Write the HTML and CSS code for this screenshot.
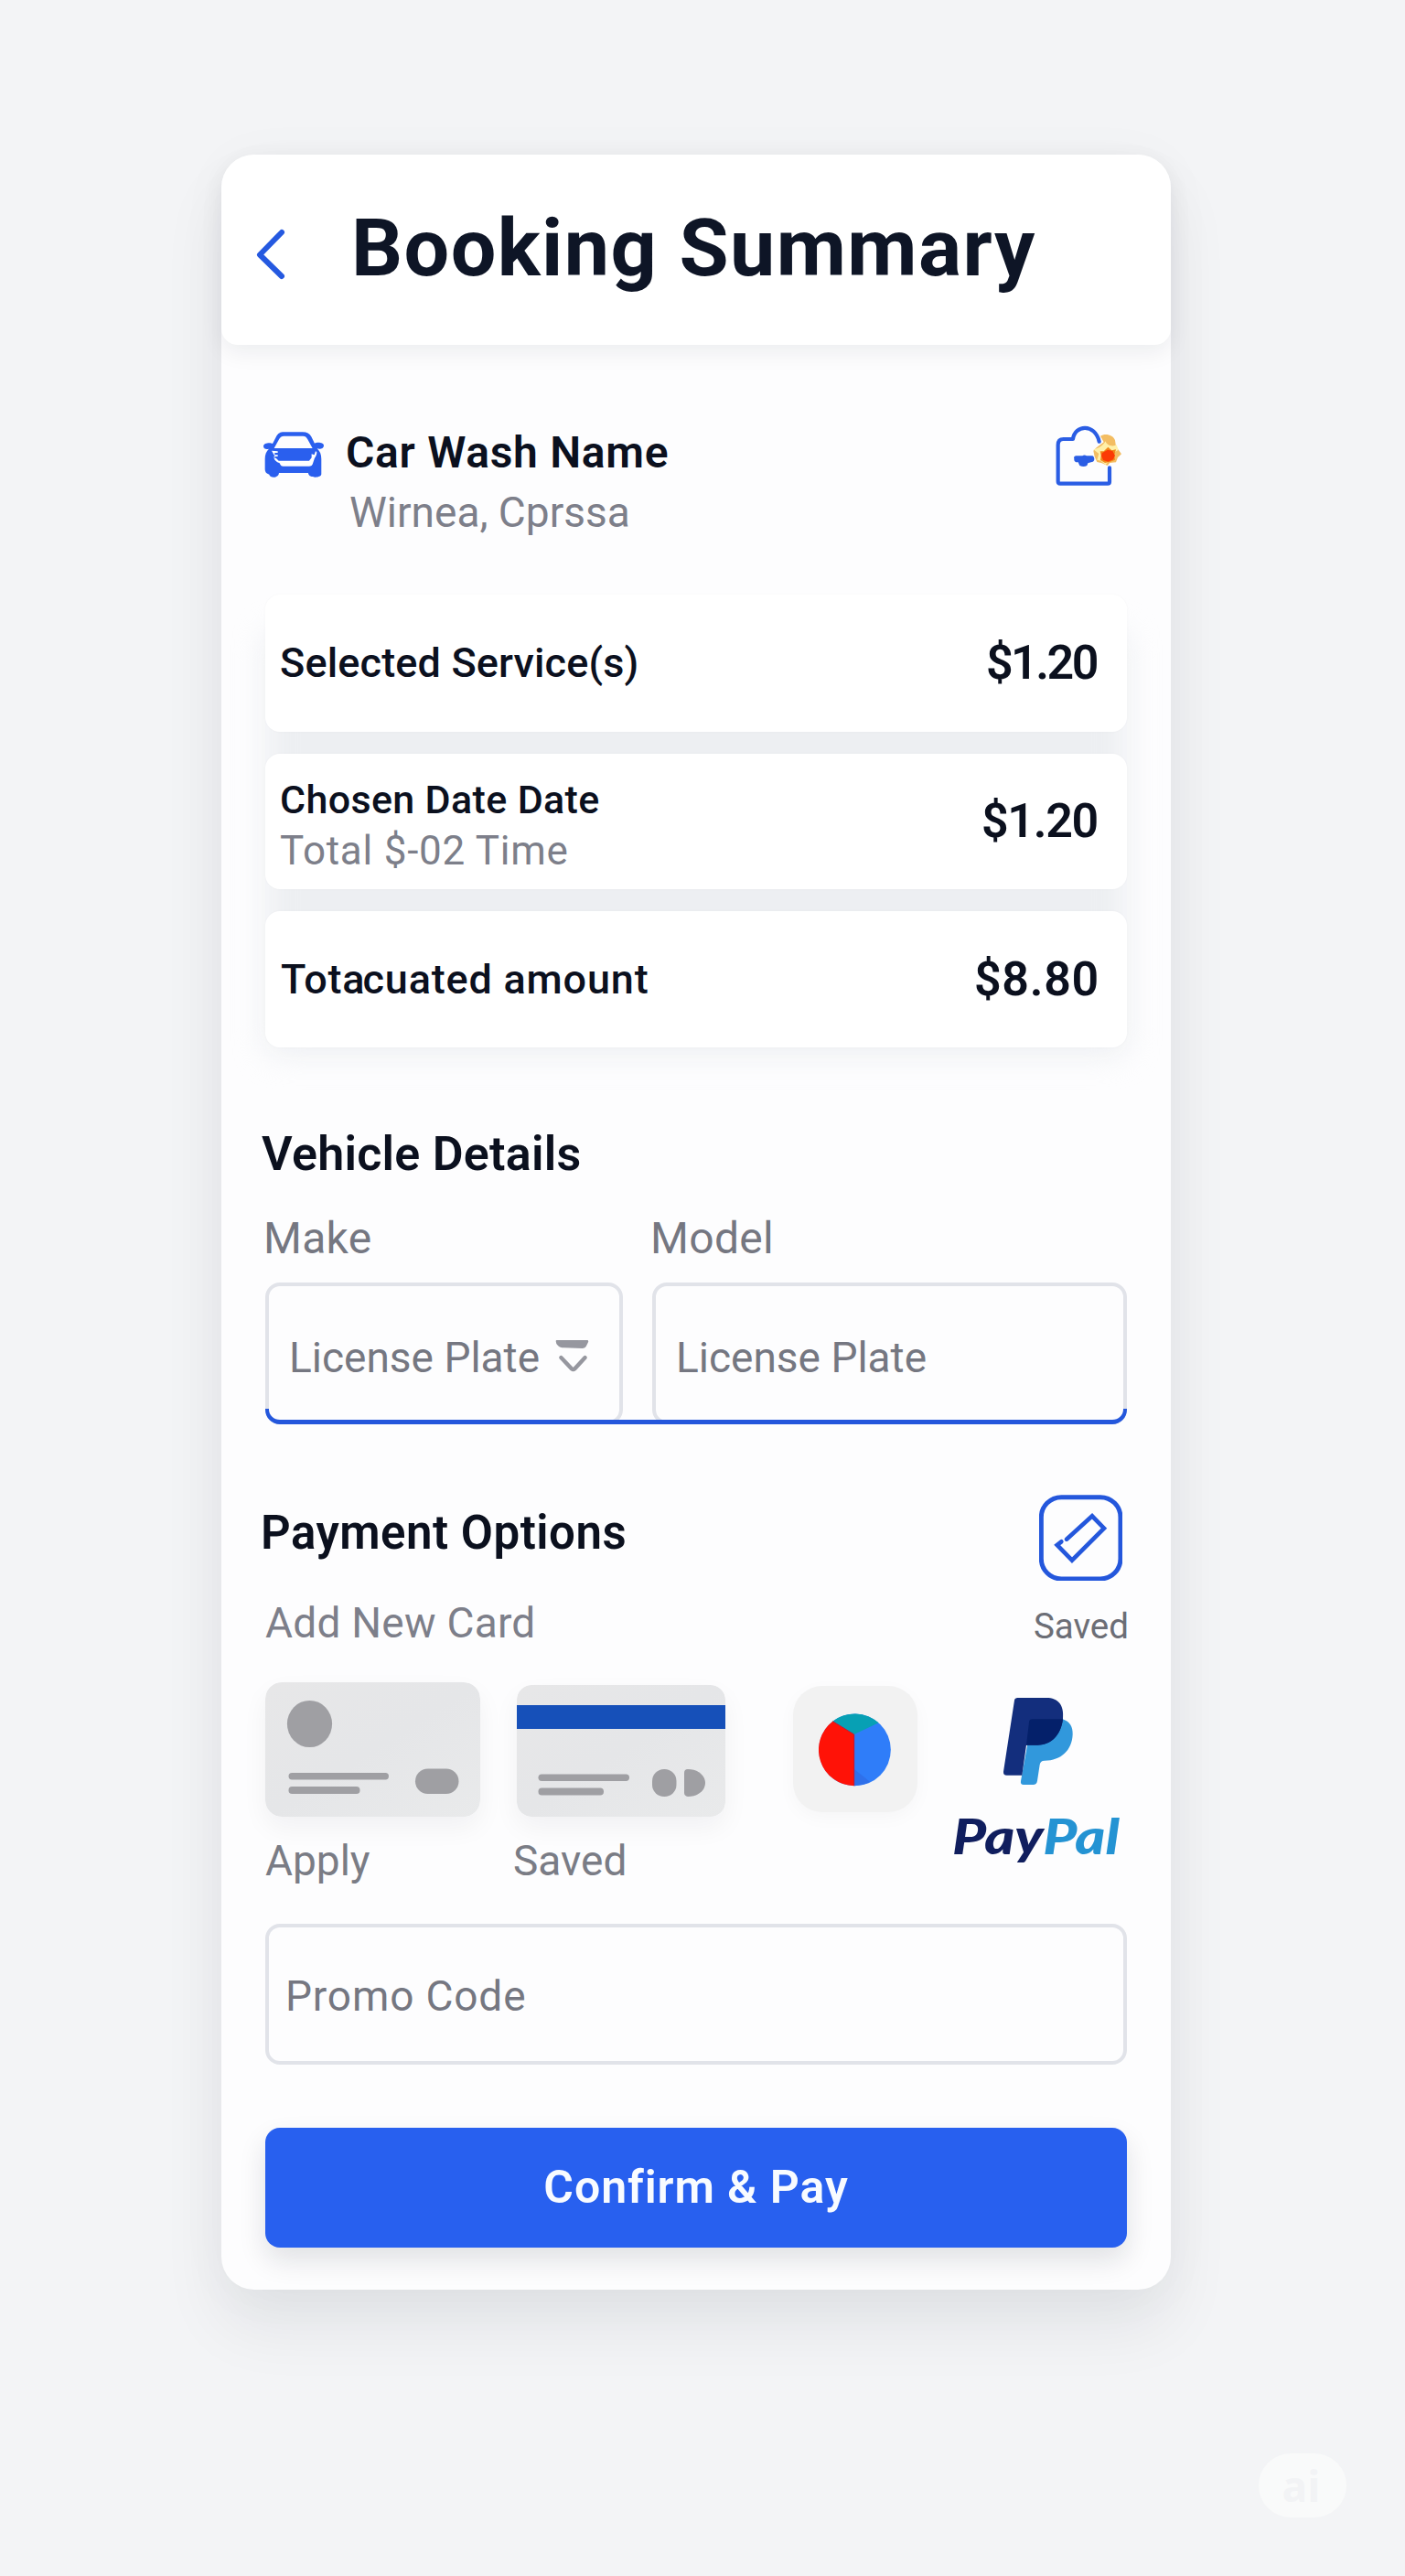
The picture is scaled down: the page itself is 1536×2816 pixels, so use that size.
FILE: index.html
```html
<!DOCTYPE html>
<html lang="en">
<head>
<meta charset="utf-8">
<title>Booking Summary</title>
<link rel="stylesheet" href="styles.css">
</head>
<body>
<main class="panel">
  <header class="header">
    <svg class="back" viewBox="0 0 36 60"><path d="M30 6 6 30.500 30 54" fill="none" stroke="#2559e0" stroke-width="6" stroke-linecap="round" stroke-linejoin="round"/></svg>
    <h1 class="title">Booking Summary</h1>
  </header>
  <div class="body">
    <section class="shop">
      <svg class="car" viewBox="80 90 205 160">
        <path fill="#2a5fee" fill-rule="evenodd" d="M150 97h62c14 0 22 5 28 15l11 22c6-4 30-4 30 7 0 11-13 13-22 10 10 9 14 20 14 34v50c0 14-43 14-43-4H134c-2 19-30 17-32 5-9-2-14-8-14-16v-35c0-14 4-24 13-33-8 2-18 1-18-9 0-11 23-13 30-8l12-23c6-11 13-15 25-15zM150 110c-7 0-11 3-15 9l-17 31h126l-16-29c-4-8-8-11-15-11z"/>
        <path fill="#fff" d="M110 158l20 2v5h-10v7h10v5h-16l8 3 11 11h100l8-10v-12l9 3 4-12 4 2c0 8-2 14-7 20l-5 15c-2 8-5 12-13 12h-86c-6 0-8-3-11-10-11-4-17-9-19-18l7 2z"/>
      </svg>
      <div class="shop-text">
        <h2 class="shop-name">Car Wash Name</h2>
        <p class="shop-place">Wirnea, Cprssa</p>
      </div>
      <svg class="bag" viewBox="459 66 225 216">
        <path d="M639 214v46q0 6-6 6H477q-7 0-7-7V139q0-19 18-19h31c6-48 72-52 86 8" fill="none" stroke="#2a5de4" stroke-width="12.500" stroke-linecap="round" stroke-linejoin="round"/>
        <path fill="#2a5de4" d="M528 175h22q6-5 14 0h18c9 1 10 19-1 20l-13 4-3 8q-11 6-24 0l-5-11q-15 1-13-12-3-6 5-9z"/>
        <path fill="#f3bd62" d="M609 110c15-11 43-4 48 14l3 20 18 25-12 11-6 16-20 2-8 9-18-8-16-4-8-17-4-20 10-10 24-18z"/>
        <path fill="#fff0a8" d="M586 154c17-4 31-12 40-27 3 15 25 19 36 12l6 16-14 9 3 16-19 11-12 13-16-13-12-3 6-20z"/>
        <path fill="#f08a1c" d="m608 160 12 0 14-14 12 11 14-3-5 18 2 16-17 7-16 3-15-9 2-15z"/>
        <path fill="#fb3a05" d="m614 166 19-11 16 4 8 15-6 13-17 7-16-5-6-14z"/>
      </svg>
    </section>

    <section class="summary">
      <div class="row row-first"><span class="label">Selected Service(s)</span><span class="price">$1.20</span></div>
      <div class="row row-date">
        <div class="stack"><span class="label label-date">Chosen Date Date</span><span class="sub">Total $-02 Time</span></div>
        <span class="price price-date">$1.20</span>
      </div>
      <div class="row row-total"><span class="label label-total">Tot<span class="tight">a</span>cuated amount</span><span class="price price-total">$8.80</span></div>
    </section>

    <h2 class="heading vehicle">Vehicle Details</h2>
    <div class="labels"><span class="field-label">Make</span><span class="field-label">Model</span></div>
    <div class="fields">
      <div class="field"><span class="field-text">License Plate</span>
        <svg class="drop" viewBox="1040 756 118 114"><path fill="#96979f" d="M1048 762h102q4 3 0 9l-6 12q-4 6-12 6l-60-2q-14 0-20-7-7-6-7-15 0-3 3-3z"/><path d="m1062 819 35 37q5 4 10 0l34-37" fill="none" stroke="#96979f" stroke-width="13" stroke-linecap="round"/></svg>
      </div>
      <div class="field"><span class="field-text">License Plate</span></div>
    </div>

    <section class="pay-head">
      <div>
        <h2 class="heading payment">Payment Options</h2>
        <p class="add-card">Add New Card</p>
      </div>
      <div class="saved">
        <svg class="saved-icon" viewBox="408 101 274 283"><rect x="415" y="109" width="260" height="268" rx="66" fill="none" stroke="#2457dc" stroke-width="15"/><path d="m498 247 84-76 39 40-105 105-49-50 14-11" fill="none" stroke="#2457dc" stroke-width="14" stroke-linecap="round"/></svg>
        <span class="saved-label">Saved</span>
      </div>
    </section>

    <section class="methods">
      <div class="method">
        <svg class="bank bank-a" viewBox="0 0 235 147">
          <defs><linearGradient id="plastic" x1="0" y1="0" x2="1" y2="1"><stop offset="0" stop-color="#e7e7e8"/><stop offset=".5" stop-color="#e5e6e8"/><stop offset="1" stop-color="#e9eaeb"/></linearGradient></defs>
          <rect width="235" height="147" rx="18" fill="url(#plastic)"/>
          <g fill="#9f9fa3"><ellipse cx="48.500" cy="45.500" rx="24.600" ry="25.600"/><rect x="25.500" y="99" width="109.500" height="7.500" rx="3.700"/><rect x="25.500" y="114" width="78" height="8" rx="3.800"/><rect x="164" y="94.500" width="47.500" height="27.500" rx="13.700"/></g>
        </svg>
        <span class="method-label">Apply</span>
      </div>
      <div class="method">
        <svg class="bank bank-b" viewBox="0 0 228 144">
          <rect width="228" height="144" rx="16" fill="url(#plastic)"/>
          <rect y="22" width="228" height="26" fill="#1650b9"/>
          <g fill="#9f9fa3"><rect x="23.500" y="97.500" width="99.500" height="7.500" rx="3.700"/><rect x="23.500" y="112.500" width="71.500" height="8" rx="3.800"/><rect x="148" y="92" width="26.500" height="30" rx="13"/><path d="M187 92c10 0 19 6 19 15s-9 15-19 15q-4-1-4-4V96q0-4 4-4z"/></g>
        </svg>
        <span class="method-label method-saved">Saved</span>
      </div>
      <div class="tile">
        <svg class="pie" viewBox="195 218 237 239">
          <circle cx="313.500" cy="337.500" r="118" fill="#2f7df9"/>
          <path fill="#ff1207" d="M311 455.500V287l-70-43a118 118 0 0 0 70 211.500z"/>
          <path fill="#07a0b4" d="m241 244 70 43 81-38a118 118 0 0 0-151-5z"/>
          <path fill="#2f70ea" d="M311 400v55.500q28 0 52-13z"/>
          <path fill="none" stroke="#c9142a" stroke-width="3" d="m241 244 70 43v168"/>
        </svg>
      </div>
      <div class="paypal">
        <svg class="pp" viewBox="798 165 234 291">
          <path fill="#3198dc" d="M895 238h100c24 8 34 26 33 50-2 52-38 86-92 86-10 0-15 5-16 14l-8 52q-2 13-14 13h-31q-11 0-9-12z"/>
          <path fill="#132e7d" d="M848 168h94c38 0 59 24 54 68-6 54-38 87-84 87h-36l-14 99h-50q-12 0-11-12l36-234q1-8 11-8z"/>
          <path fill="#04206a" d="M895 238h101c-6 52-38 85-84 85h-36l9-75q1-10 10-10z"/>
        </svg>
        <span class="wordmark"><span class="pay">Pay</span><span class="pal">Pal</span></span>
      </div>
    </section>

    <div class="promo"><span class="promo-text">Promo Code</span></div>
    <button class="confirm"><span class="confirm-text">Confirm &amp; Pay</span></button>
  </div>
</main>
<div class="badge"><span class="badge-text">ai</span></div>
</body>
</html>
```
FILE: styles.css
```css
* { box-sizing: border-box; }
body {
  margin: 0;
  height: 2816px;
  padding-top: 169px;
  background: #f3f4f6;
  font-family: Roboto, "Liberation Sans", sans-serif;
  color: #0b101e;
  position: relative;
  white-space: nowrap;
}
h1, h2, p { margin: 0; }
svg { display: block; flex: none; }
.panel {
  width: 1038px;
  height: 2334px;
  margin-left: 242px;
  border-radius: 36px;
  background: #fdfdfe;
  box-shadow: 0 40px 70px rgba(20, 24, 40, .07), 0 4px 60px rgba(20, 24, 40, .03);
}
.header {
  height: 208px;
  display: flex;
  align-items: flex-start;
  border-radius: 36px 36px 18px 18px;
  background: #fff;
  box-shadow: 0 8px 24px rgba(20, 24, 40, .07);
}
.back { width: 36px; height: 60px; margin: 79px 0 0 36px; }
.title { margin: 52px 0 0 70px; font-size: 88px; line-height: 100px; font-weight: 700; letter-spacing: 1.400px; color: #0e1526; }
.body { padding: 85px 48px 0; }

.shop { display: flex; height: 126px; margin-bottom: 62px; }
.car { width: 68.300px; height: 53.300px; margin: 8px 0 0 -3.300px; }
.shop-text { margin-left: 23px; padding-top: 5px; flex: 1; }
.shop-name { font-size: 48px; line-height: 56px; font-weight: 650; letter-spacing: .7px; }
.shop-place { margin: 9px 0 0 4px; font-size: 46px; line-height: 56px; color: #7d7f8a; }
.bag { width: 75px; height: 72px; margin-right: 4px; }

.summary { position: relative; z-index: 0; display: flex; flex-direction: column; gap: 24px; }
.summary::before { content: ""; position: absolute; z-index: -1; inset: 40px 0 -8px; border-radius: 16px; background: #edeff2; filter: blur(16px); }
.row { display: flex; align-items: center; justify-content: space-between; padding: 0 31px 0 16px; border-radius: 16px; background: #fff; box-shadow: 0 0 3px rgba(20, 24, 40, .03); }
.row-first { height: 150px; }
.row-date { height: 148px; }
.row-total { height: 149px; }
.stack { display: flex; flex-direction: column; padding-top: 7px; }
.label { font-size: 45px; line-height: 56px; font-weight: 550; letter-spacing: .15px; }
.label-date { font-size: 43px; letter-spacing: .35px; }
.label-total { letter-spacing: .8px; margin-left: 1px; }
.tight { letter-spacing: -2px; }
.sub { font-size: 44px; line-height: 56px; letter-spacing: .75px; color: #7d7f8a; }
.price { font-size: 52px; line-height: 60px; font-weight: 600; letter-spacing: -2.500px; margin-right: 2px; }
.price-date { letter-spacing: -1.300px; margin-right: 1px; }
.price-total { letter-spacing: .7px; margin-right: -1px; }

.heading { font-size: 52px; line-height: 60px; font-weight: 650; }
.vehicle { margin: 87px 0 34px -4px; letter-spacing: .25px; }
.labels { display: grid; grid-template-columns: 391px 1fr; column-gap: 32px; margin: 0 0 20px -2px; }
.field-label { font-size: 48px; line-height: 56px; letter-spacing: .3px; color: #757781; }
.fields { position: relative; display: grid; grid-template-columns: 391px 1fr; column-gap: 32px; height: 155px; }
.fields::after { content: ""; position: absolute; inset: 0; border: 4px solid #2457dc; border-bottom-width: 5px; border-radius: 16px; clip-path: inset(138px 0 0 0); }
.field { display: flex; align-items: center; padding: 8px 0 0 22px; border: 4px solid #e1e3e9; border-radius: 16px; }
.field-text { font-size: 46px; line-height: 56px; color: #757781; }
.drop { width: 39.300px; height: 38px; margin: -3px 0 0 16px; }

.pay-head { display: flex; justify-content: space-between; margin-top: 77px; height: 168px; }
.payment { margin: 12px 0 0 -5px; font-size: 51px; letter-spacing: .5px; }
.add-card { margin-top: 40px; font-size: 46px; line-height: 56px; letter-spacing: .25px; color: #7d7f8a; }
.saved { display: flex; flex-direction: column; align-items: flex-end; }
.saved-icon { width: 91.300px; height: 94.300px; margin-right: 5px; }
.saved-label { margin: 26px -2px 0 0; font-size: 38.500px; line-height: 48px; color: #6c6e76; }

.methods { display: flex; align-items: flex-start; margin-top: 37px; height: 222px; }
.method { display: flex; flex-direction: column; }
.method + .method { margin-left: 40px; }
.bank-a { width: 235px; height: 147px; border-radius: 18px; box-shadow: 0 12px 28px rgba(20, 24, 40, .05); }
.bank-b { width: 228px; height: 144px; margin-top: 3px; border-radius: 16px; box-shadow: 0 12px 28px rgba(20, 24, 40, .05); }
.method-label { margin-top: 21px; font-size: 46px; line-height: 54px; color: #7a7c85; }
.method-saved { margin-left: -4px; }
.tile { margin: 4px 0 0 74px; width: 136px; height: 138px; border-radius: 32px; background: #f2f2f2; padding: 30px 0 0 28px; box-shadow: 0 6px 20px rgba(20, 24, 40, .03); }
.pie { width: 79px; height: 79.700px; }
.paypal { margin-left: 38px; padding-top: 16px; }
.pp { width: 78px; height: 97px; margin-left: 55px; }
.wordmark { display: block; width: 154px; margin-top: 25px; font: italic 900 53px/60px Lato, sans-serif; transform: scaleX(1.190); transform-origin: left; }
.pay { color: #101e5e; }
.pal { color: #2493d3; }

.promo { display: flex; align-items: center; margin-top: 42px; height: 154px; padding: 4px 0 0 18px; border: 4px solid #e1e3e9; border-radius: 16px; }
.promo-text { font-size: 46px; line-height: 56px; letter-spacing: .85px; color: #757781; }
.confirm { display: flex; align-items: center; justify-content: center; width: 100%; height: 131px; margin-top: 69px; padding: 0 0 2px; border: 0; border-radius: 16px; background: #2860ef; color: #f8fbff; font-family: inherit; box-shadow: 0 14px 30px rgba(20, 24, 40, .12); }
.confirm-text { font-size: 50px; line-height: 60px; font-weight: 600; letter-spacing: .9px; }

.badge { position: absolute; left: 1376px; top: 2682px; width: 96px; height: 70px; border-radius: 35px; background: #f9fafa; display: flex; align-items: center; justify-content: center; padding-right: 3px; }
.badge-text { font: 700 46px/56px "Open Sans", sans-serif; color: #f2f3f5; }
```
